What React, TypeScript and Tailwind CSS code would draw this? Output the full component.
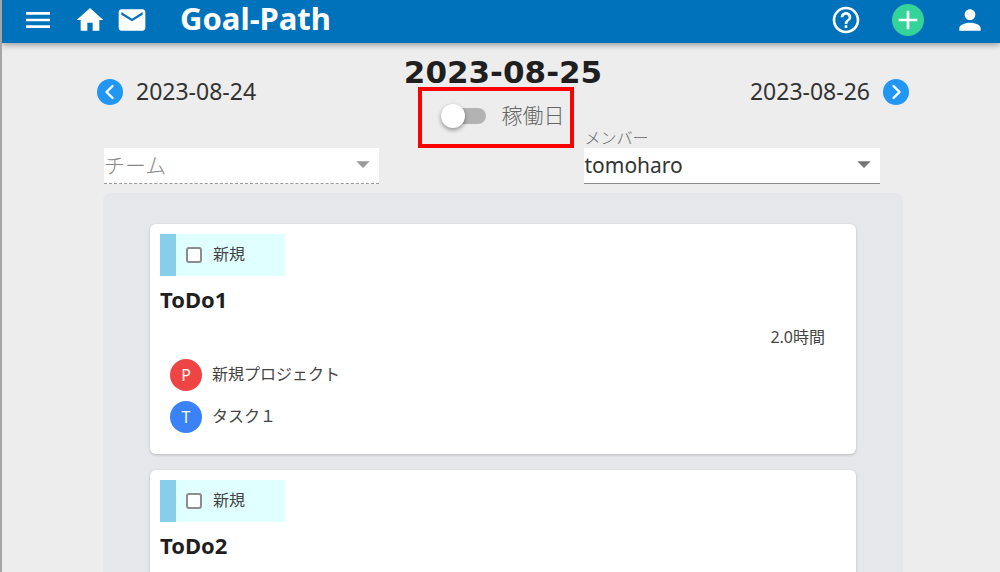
import { MdAdd, MdArrowDropDown, MdEmail, MdHelpOutline, MdHome, MdMenu, MdPerson } from 'react-icons/md'

interface Todo {
  id: number
  title: string
  status: string
  hours: string
  project: string
  task: string
}

const TODOS: Todo[] = [
  { id: 1, title: 'ToDo1', status: '新規', hours: '2.0時間', project: '新規プロジェクト', task: 'タスク１' },
  { id: 2, title: 'ToDo2', status: '新規', hours: '2.0時間', project: '新規プロジェクト', task: 'タスク１' },
]

function Header() {
  return (
    <header className="relative flex h-[43px] items-center bg-[#0072bc] pr-[14px] pb-[3px] pl-5 text-white shadow-[0_2px_6px_rgba(0,0,0,0.35)]">
      <button type="button" aria-label="menu">
        <MdMenu className="size-8" />
      </button>
      <a href="#home" aria-label="home" className="ml-5">
        <MdHome className="size-8" />
      </a>
      <a href="#mail" aria-label="mail" className="ml-[10px]">
        <MdEmail className="size-8" />
      </a>
      <h1 className="ml-8 pb-1 text-[31px] leading-8 font-bold">Goal-Path</h1>
      <div className="ml-auto flex items-center gap-[30px]">
        <button type="button" aria-label="help">
          <MdHelpOutline className="size-8" />
        </button>
        <button type="button" aria-label="add" className="rounded-full bg-[#34d399]">
          <MdAdd className="size-8" />
        </button>
        <button type="button" aria-label="account">
          <MdPerson className="size-8" />
        </button>
      </div>
    </header>
  )
}

function NavButton({ label, path }: { label: string; path: string }) {
  return (
    <button type="button" aria-label={label} className="flex size-[26px] items-center justify-center rounded-full bg-[#2196f3]">
      <svg viewBox="0 0 26 26" className="size-[26px]" fill="none" stroke="white" strokeWidth="2.4" strokeLinecap="round" strokeLinejoin="round">
        <path d={path} />
      </svg>
    </button>
  )
}

function DateNav() {
  return (
    <div className="grid grid-cols-[1fr_auto_1fr] items-end pt-[13px]">
      <div className="flex items-center gap-[13px] text-[23px] leading-7 text-[#333]">
        <NavButton label="前日" path="M15.5 7 L9.5 13 L15.5 19" />
        <span className="pb-[2px]">2023-08-24</span>
      </div>
      <h2 className="pb-[19px] font-['DejaVu_Sans','Noto_Sans_CJK_JP',sans-serif] text-[31px] leading-8 font-bold text-[#1f1f1f]">
        2023-08-25
      </h2>
      <div className="flex items-center justify-end gap-[13px] text-[23px] leading-7 text-[#333]">
        <span className="pb-[2px]">2023-08-26</span>
        <NavButton label="翌日" path="M10.5 7 L16.5 13 L10.5 19" />
      </div>
    </div>
  )
}

function Filters() {
  return (
    <div className="-mt-5 flex h-[97px] items-end pr-[29px] pl-[7px]">
      <div className="relative flex-[275]">
        <select aria-label="チーム" className="block h-9 w-full appearance-none border-b border-dashed border-[#999] bg-white text-[21px] font-light text-[#888]">
          <option>チーム</option>
        </select>
        <MdArrowDropDown className="pointer-events-none absolute top-0 right-0 size-8 text-[#999]" />
      </div>

      <label className="mr-[10px] ml-[39px] flex h-[61px] w-[156px] shrink-0 items-center gap-[15px] self-start border-4 border-[#ff0000] pb-1 pl-[19px] text-[21px] font-light text-[#666]">
        <input
          type="checkbox"
          className="relative h-6 w-[45px] shrink-0 appearance-none before:absolute before:top-1 before:left-1 before:h-4 before:w-[41px] before:rounded-full before:bg-[#b3b3b3] after:absolute after:top-0 after:left-0 after:size-6 after:rounded-full after:bg-white after:shadow-[0_2px_4px_rgba(0,0,0,0.4)]"
        />
        <span className="whitespace-nowrap">稼働日</span>
      </label>

      <div className="flex-[295]">
        <label htmlFor="member" className="block text-base leading-5 font-light text-[#666]">メンバー</label>
        <div className="relative">
          <select id="member" className="block h-9 w-full appearance-none border-b border-[#8c8c8c] bg-white text-[21px] text-[#333]">
            <option>tomoharo</option>
          </select>
          <MdArrowDropDown className="pointer-events-none absolute top-0 right-0 size-8 text-[#757575]" />
        </div>
      </div>
    </div>
  )
}

function TodoCard({ todo }: { todo: Todo }) {
  return (
    <article className="rounded-md bg-white p-[10px] pb-[21px] shadow-[0_1px_3px_rgba(0,0,0,0.2)]">
      <label className="flex h-[42px] w-[125px] items-center border-l-16 border-[#87ceeb] bg-[#e0ffff] pl-[10px] text-base text-[#444]">
        <input type="checkbox" className="size-4 appearance-none rounded-[3px] border-2 border-[#8c8c8c] bg-white" />
        <span className="ml-[11px] pb-[2px]">{todo.status}</span>
      </label>
      <h3 className="mt-[7px] text-[22px] leading-8 font-bold text-[#1f1f1f]">{todo.title}</h3>
      <p className="mt-[10px] pr-[21px] text-right text-base leading-6 text-[#444]">{todo.hours}</p>
      <ul className="mt-[10px] space-y-[10px] pl-[10px] text-base text-[#444]">
        <li className="flex items-center gap-[10px]">
          <span className="flex size-8 items-center justify-center rounded-full bg-[#ef4444] text-white">P</span>
          <span className="pb-[2px]">{todo.project}</span>
        </li>
        <li className="flex items-center gap-[10px]">
          <span className="flex size-8 items-center justify-center rounded-full bg-[#3b82f6] text-white">T</span>
          <span className="pb-[2px]">{todo.task}</span>
        </li>
      </ul>
    </article>
  )
}

export default function App() {
  return (
    <div className="h-screen overflow-y-auto border-l-2 border-[#a6a6a6] bg-[#ededed] font-['Noto_Sans','Noto_Sans_CJK_JP',sans-serif] [scrollbar-width:none]">
      <Header />
      <main className="pr-[91px] pl-[95px]">
        <DateNav />
        <Filters />
        <section className="mx-[6px] mt-[9px] space-y-4 rounded-lg bg-[#e5e7eb] px-[47px] pt-[31px] pb-8">
          {TODOS.map(todo => <TodoCard key={todo.id} todo={todo} />)}
        </section>
      </main>
    </div>
  )
}
